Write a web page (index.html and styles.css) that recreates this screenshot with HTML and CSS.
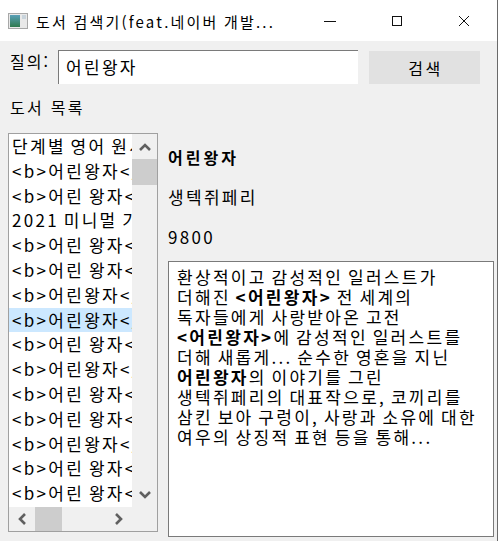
FILE: index.html
```html
<!DOCTYPE html>
<html lang="ko">
<head>
  <meta charset="UTF-8">
  <meta name="viewport" content="width=device-width, initial-scale=1.0">
  <title>도서 검색기</title>
  <link rel="stylesheet" href="styles.css">
</head>
<body>
  <div class="window">
    <div class="titlebar">
      <svg class="app-icon" width="20" height="16" viewBox="0 0 20 16">
        <defs>
          <linearGradient id="ig" x1="0" y1="0" x2="0" y2="1">
            <stop offset="0" stop-color="#5aa0b8"/>
            <stop offset="1" stop-color="#2f7a4e"/>
          </linearGradient>
        </defs>
        <rect x="0.5" y="0.5" width="19" height="15" fill="#e9e9e9" stroke="#a8a8a8"/>
        <rect x="2" y="2" width="10" height="12" fill="url(#ig)"/>
        <rect x="14" y="2" width="4" height="4" fill="#c9d4dc"/>
      </svg>
      <span class="title">도서 검색기(feat.네이버 개발...</span>
      <div class="caption-btns">
        <div class="cap">
          <svg width="12" height="12" viewBox="0 0 12 12"><line x1="0" y1="6.5" x2="12" y2="6.5" stroke="#111" stroke-width="1"/></svg>
        </div>
        <div class="cap">
          <svg width="12" height="12" viewBox="0 0 12 12"><rect x="1.5" y="1.5" width="9" height="9" fill="none" stroke="#111" stroke-width="1"/></svg>
        </div>
        <div class="cap">
          <svg width="12" height="12" viewBox="0 0 12 12"><path d="M1 1 L11 11 M11 1 L1 11" stroke="#111" stroke-width="1"/></svg>
        </div>
      </div>
    </div>

    <div class="content">
      <div class="query-row">
        <label class="query-label" for="q">질의:</label>
        <div class="query-input" id="q">어린왕자</div>
        <button class="search-btn">검색</button>
      </div>

      <div class="section-label">도서 목록</div>

      <div class="main-row">
        <div class="book-list">
          <div class="items">
            <div class="item">단계별 영어 원서</div>
            <div class="item">&lt;b&gt;어린왕자&lt;/b&gt;</div>
            <div class="item">&lt;b&gt;어린 왕자&lt;/b&gt;</div>
            <div class="item">2021 미니멀 기록</div>
            <div class="item">&lt;b&gt;어린 왕자&lt;/b&gt;</div>
            <div class="item">&lt;b&gt;어린 왕자&lt;/b&gt;</div>
            <div class="item">&lt;b&gt;어린왕자&lt;/b&gt;</div>
            <div class="item selected">&lt;b&gt;어린왕자&lt;/b&gt;</div>
            <div class="item">&lt;b&gt;어린 왕자&lt;/b&gt;</div>
            <div class="item">&lt;b&gt;어린왕자&lt;/b&gt;</div>
            <div class="item">&lt;b&gt;어린 왕자&lt;/b&gt;</div>
            <div class="item">&lt;b&gt;어린 왕자&lt;/b&gt;</div>
            <div class="item">&lt;b&gt;어린왕자&lt;/b&gt;</div>
            <div class="item">&lt;b&gt;어린 왕자&lt;/b&gt;</div>
            <div class="item">&lt;b&gt;어린 왕자&lt;/b&gt;</div>
          </div>

          <div class="vscroll">
            <div class="sb-btn">
              <svg width="12" height="8" viewBox="0 0 12 8"><path d="M1 7 L6 2 L11 7" fill="none" stroke="#606060" stroke-width="2.6"/></svg>
            </div>
            <div class="vthumb"></div>
            <div class="sb-space"></div>
            <div class="sb-btn">
              <svg width="12" height="8" viewBox="0 0 12 8"><path d="M1 1 L6 6 L11 1" fill="none" stroke="#606060" stroke-width="2.6"/></svg>
            </div>
          </div>

          <div class="hscroll">
            <div class="sb-btn hbtn">
              <svg width="8" height="12" viewBox="0 0 8 12"><path d="M7 1 L2 6 L7 11" fill="none" stroke="#606060" stroke-width="2.6"/></svg>
            </div>
            <div class="hthumb"></div>
            <div class="sb-space"></div>
            <div class="sb-btn hbtn">
              <svg width="8" height="12" viewBox="0 0 8 12"><path d="M1 1 L6 6 L1 11" fill="none" stroke="#606060" stroke-width="2.6"/></svg>
            </div>
          </div>

          <div class="corner"></div>
        </div>

        <div class="detail">
          <div class="info bold">어린왕자</div>
          <div class="info">생텍쥐페리</div>
          <div class="info">9800</div>
          <div class="desc">
            환상적이고 감성적인 일러스트가<br>
            더해진 <b>&lt;어린왕자&gt;</b> 전 세계의<br>
            독자들에게 사랑받아온 고전<br>
            <b>&lt;어린왕자&gt;</b>에 감성적인 일러스트를<br>
            더해 새롭게... 순수한 영혼을 지닌<br>
            <b>어린왕자</b>의 이야기를 그린<br>
            생텍쥐페리의 대표작으로, 코끼리를<br>
            삼킨 보아 구렁이, 사랑과 소유에 대한<br>
            여우의 상징적 표현 등을 통해...
          </div>
        </div>
      </div>
    </div>
  </div>
</body>
</html>
```

FILE: styles.css
```css
* {
  box-sizing: border-box;
}

body {
  margin: 0;
  width: 499px;
  height: 541px;
  overflow: hidden;
  background: #fff;
  color: #000;
  font-family: "Noto Sans CJK KR", "Noto Sans", sans-serif;
}

.window {
  width: 498px;
  height: 541px;
  border-right: 1px solid #6a6a6a;
  display: flex;
  flex-direction: column;
}

/* title bar */
.titlebar {
  height: 41px;
  flex: none;
  background: #fff;
  display: flex;
  align-items: center;
  padding-left: 8px;
}

.app-icon {
  margin-right: 8px;
  flex: none;
}

.title {
  flex: 1;
  font-size: 15px;
  letter-spacing: 2.2px;
  word-spacing: -1px;
  white-space: nowrap;
  line-height: 20px;
  margin-top: 2px;
}

.caption-btns {
  display: flex;
}

.cap {
  width: 67px;
  height: 41px;
  display: flex;
  align-items: center;
  justify-content: center;
}

/* content */
.content {
  flex: 1;
  background: #f0f0f0;
  padding: 9px 3px 0 8px;
  display: flex;
  flex-direction: column;
}

.query-row {
  display: flex;
  align-items: flex-start;
  margin-right: 14px;
}

.query-label {
  width: 50px;
  padding-left: 2px;
  font-size: 16px;
  letter-spacing: 2px;
  line-height: 20px;
  margin-top: 1px;
  white-space: nowrap;
}

.query-input {
  width: 300px;
  height: 34px;
  background: #fff;
  border-top: 1px solid #7a7a7a;
  border-left: 1px solid #7a7a7a;
  padding-left: 7px;
  font-size: 17px;
  letter-spacing: 2.3px;
  line-height: 32px;
}

.search-btn {
  margin-left: 11px;
  width: 111px;
  height: 33px;
  margin-top: 1px;
  border: none;
  background: #e1e1e1;
  font-family: inherit;
  font-size: 16px;
  letter-spacing: 2.5px;
  color: #000;
  padding: 0 0 0 2px;
}

.section-label {
  margin-top: 13px;
  padding-left: 2px;
  font-size: 16px;
  letter-spacing: 2.3px;
  line-height: 20px;
}

.main-row {
  margin-top: 16px;
  display: flex;
  align-items: flex-start;
}

/* book list */
.book-list {
  width: 150px;
  height: 399px;
  border: 1px solid #a0a0a0;
  background: #fff;
  display: grid;
  grid-template-columns: 123px 25px;
  grid-template-rows: 373px 24px;
  flex: none;
}

.items {
  overflow: hidden;
}

.item {
  height: 24.8px;
  line-height: 24.8px;
  padding-left: 3px;
  font-size: 17px;
  letter-spacing: 2.3px;
  word-spacing: -2.3px;
  white-space: nowrap;
  overflow: hidden;
}

.item.selected {
  background: #cce8ff;
}

.vscroll {
  background: #f0f0f0;
  display: flex;
  flex-direction: column;
}

.sb-btn {
  height: 25px;
  display: flex;
  align-items: center;
  justify-content: center;
  flex: none;
}

.vthumb {
  height: 26px;
  background: #cdcdcd;
}

.sb-space {
  flex: 1;
}

.hscroll {
  background: #f0f0f0;
  display: flex;
}

.hbtn {
  width: 26px;
  height: 24px;
}

.hthumb {
  width: 27px;
  background: #cdcdcd;
}

.corner {
  background: #f0f0f0;
}

/* detail panel */
.detail {
  flex: 1;
  padding-left: 10px;
}

.info {
  font-size: 17px;
  letter-spacing: 2.3px;
  line-height: 20px;
  margin-top: 20px;
}

.info:first-child {
  margin-top: 14px;
}

.info.bold {
  font-weight: 700;
  font-size: 16px;
  letter-spacing: 3px;
}

.desc {
  margin-top: 14px;
  height: 276px;
  background: #fff;
  border: 1px solid #7a7a7a;
  padding: 5px 0 0 8px;
  font-size: 17px;
  letter-spacing: 2.3px;
  word-spacing: -2.3px;
  line-height: 20px;
  white-space: nowrap;
  overflow: hidden;
}

.desc b {
  font-weight: 700;
}
```
